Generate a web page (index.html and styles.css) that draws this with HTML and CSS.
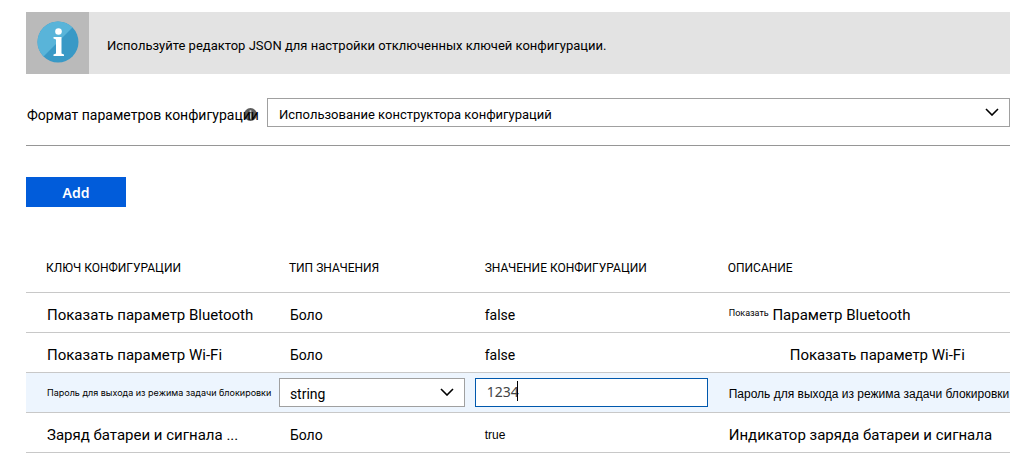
FILE: index.html
```html
<!DOCTYPE html>
<html lang="ru">
<head>
<meta charset="utf-8">
<meta name="viewport" content="width=device-width, initial-scale=1">
<title>Параметры конфигурации</title>
<link rel="stylesheet" href="styles.css">
</head>
<body>
<main class="page">
  <section class="banner">
    <div class="banner-icon">
      <svg width="42" height="42" viewBox="0 0 42 42" aria-hidden="true">
        <circle cx="21" cy="21" r="20.5" fill="#3999c6"/>
        <path d="M6.500 35.500A20.500 20.500 0 0 1 35.500 6.500Z" fill="#59b4d9"/>
        <circle cx="21.500" cy="10.500" r="3.300" fill="#fff"/>
        <path d="M16.500 16H24.500V32.500L27 33.500V35H16.500V33.500L19 32.500V18.500L16.500 17.500Z" fill="#fff"/>
      </svg>
    </div>
    <p class="banner-text">Используйте редактор JSON для настройки отключенных ключей конфигурации.</p>
  </section>

  <div class="format">
    <div class="format-label">
      <label for="format">Формат параметров конфигурации</label>
      <svg class="format-info" width="13" height="13" viewBox="0 0 12 12" aria-hidden="true">
        <circle cx="6" cy="6" r="6" fill="#5c5c5c"/>
        <path d="M5.200 2H6.800V3.600H5.200ZM5.200 4.800H6.800V10H5.200Z" fill="#ccc"/>
      </svg>
    </div>
    <div class="select-wrap">
      <select class="field" id="format"><option>Использование конструктора конфигураций</option></select>
      <svg class="chevron" width="14" height="8" viewBox="0 0 14 8" aria-hidden="true"><path d="M1 1L7 7L13 1" fill="none" stroke="#000" stroke-width="1.600"/></svg>
    </div>
  </div>

  <button class="add" type="button">Add</button>

  <table class="grid">
    <thead>
      <tr>
        <th class="col-key" scope="col">КЛЮЧ КОНФИГУРАЦИИ</th>
        <th class="col-type" scope="col">ТИП ЗНАЧЕНИЯ</th>
        <th class="col-value" scope="col">ЗНАЧЕНИЕ КОНФИГУРАЦИИ</th>
        <th class="col-desc" scope="col">ОПИСАНИЕ</th>
      </tr>
    </thead>
    <tbody>
      <tr>
        <td>Показать параметр Bluetooth</td>
        <td class="medium">Боло</td>
        <td class="medium">false</td>
        <td><span class="prefix">Показать</span> Параметр Bluetooth</td>
      </tr>
      <tr>
        <td>Показать параметр Wi-Fi</td>
        <td class="medium">Боло</td>
        <td class="medium">false</td>
        <td class="indented">Показать параметр Wi-Fi</td>
      </tr>
      <tr class="active">
        <td class="tiny">Пароль для выхода из режима задачи блокировки</td>
        <td class="edit">
          <div class="select-wrap">
            <select class="field type-field" aria-label="Тип значения"><option>string</option></select>
            <svg class="chevron" width="14" height="8" viewBox="0 0 14 8" aria-hidden="true"><path d="M1 1L7 7L13 1" fill="none" stroke="#000" stroke-width="1.600"/></svg>
          </div>
        </td>
        <td class="edit">
          <div class="input-wrap">
            <input class="field value-field" type="text" value="1234" aria-label="Значение конфигурации">
            <span class="caret"></span>
          </div>
        </td>
        <td class="small">Пароль для выхода из режима задачи блокировки</td>
      </tr>
      <tr>
        <td>Заряд батареи и сигнала ...</td>
        <td class="medium">Боло</td>
        <td class="compact">true</td>
        <td>Индикатор заряда батареи и сигнала</td>
      </tr>
    </tbody>
  </table>
</main>
</body>
</html>
```
FILE: styles.css
```css
* {
  box-sizing: border-box;
}

body {
  margin: 0;
  background: #fff;
  color: #000;
  font-family: Roboto, "Liberation Sans", sans-serif;
  font-size: 15px;
}

.page {
  padding: 12px 15px 0 26px;
}

.banner {
  display: flex;
  min-height: 62px;
  background: #e3e3e3;
}

.banner-icon {
  flex: 0 0 63px;
  display: flex;
  justify-content: center;
  padding-top: 9px;
  background: #bababa;
}

.banner-text {
  margin: 0;
  padding: 24px 18px 18px;
  font-size: 13px;
  line-height: 20px;
}

.format {
  display: flex;
  align-items: center;
  padding: 24px 0 18px;
  border-bottom: 1px solid #969696;
}

.format-label {
  position: relative;
  flex: 0 0 241px;
  padding: 4px 0 0 1px;
  font-size: 14px;
  line-height: 20px;
  white-space: nowrap;
}

.format-info {
  position: absolute;
  top: 7px;
  right: 10px;
  z-index: -1;
}

.select-wrap,
.input-wrap {
  position: relative;
  flex: 1;
}

.field {
  display: block;
  width: 100%;
  height: 29px;
  margin: 0;
  padding: 3px 11px 0;
  border: 1px solid #a0a0a0;
  border-radius: 0;
  outline: 0;
  background: #fff;
  color: #000;
  font-family: inherit;
  font-size: 13px;
  appearance: none;
}

.chevron {
  position: absolute;
  top: 10px;
  right: 11px;
  pointer-events: none;
}

.add {
  display: block;
  width: 100px;
  height: 30px;
  margin-top: 31px;
  padding: 0;
  border: 0;
  background: #015cda;
  color: #fff;
  font-family: "Noto Sans", sans-serif;
  font-size: 14px;
  font-weight: 600;
}

.grid {
  width: 100%;
  margin-top: 36px;
  border-collapse: collapse;
  table-layout: fixed;
}

.grid th,
.grid td {
  height: 40px;
  padding: 6px 0 0 11px;
  border-bottom: 1px solid #c8c8c8;
  line-height: 20px;
  text-align: left;
  white-space: nowrap;
}

.grid th {
  height: 49px;
  padding: 1px 0 0 10px;
  font-size: 12px;
  font-weight: 400;
}

.grid th:first-child {
  padding-left: 20px;
}

.grid td:first-child {
  padding-left: 21px;
}

.col-key {
  width: 25.7%;
}

.col-type {
  width: 19.9%;
}

.col-value {
  width: 24.7%;
}

.grid td.medium {
  font-size: 14px;
}

.grid td.medium + td.medium,
.grid td.compact {
  padding-left: 10px;
}

.grid td.compact {
  font-family: "Liberation Sans", sans-serif;
  font-size: 12px;
}

.grid td.indented {
  padding-left: 72px;
}

.prefix {
  font-size: 9px;
  line-height: 10px;
  vertical-align: 4px;
}

.active {
  background: #edf5fe;
}

.grid td.tiny {
  padding-top: 2px;
  font-family: Inter, sans-serif;
  font-size: 9px;
}

.grid td.small {
  padding-top: 4px;
  font-family: "Liberation Sans", sans-serif;
  font-size: 12px;
}

.grid td.edit {
  padding: 1px 10px 0 0;
}

.type-field {
  padding-left: 10px;
  font-size: 14px;
}

.value-field {
  padding-top: 0;
  padding-bottom: 3px;
  border-color: #0058ad;
  color: #444;
  font-family: "Noto Sans", sans-serif;
  font-size: 14px;
}

.caret {
  position: absolute;
  top: 3px;
  left: 42px;
  width: 1px;
  height: 20px;
  background: #000;
}
```
